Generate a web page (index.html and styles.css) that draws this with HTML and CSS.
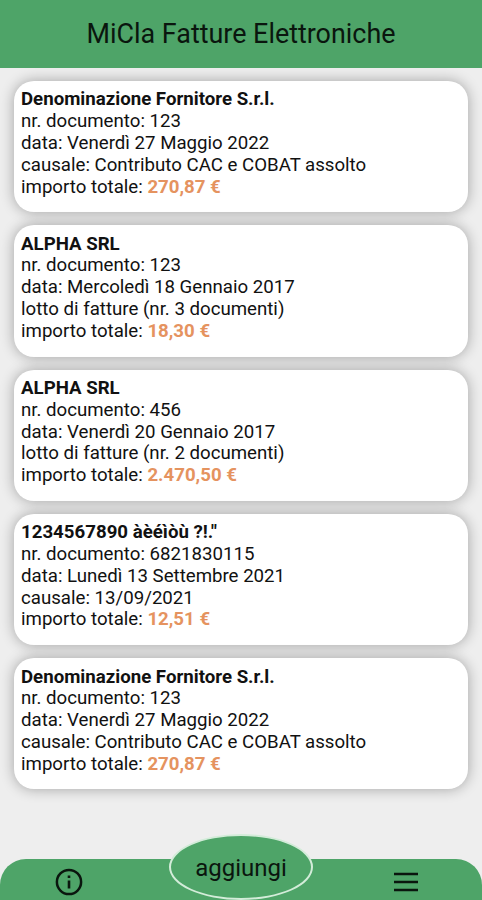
FILE: index.html
```html
<!DOCTYPE html>
<html lang="it">
<head>
    <meta charset="UTF-8">
    <meta name="viewport" content="width=device-width, initial-scale=1.0">
    <title>MiCla Fatture Elettroniche</title>
    <link rel="stylesheet" href="styles.css">
</head>
<body>
    <header class="header">
        <h1>MiCla Fatture Elettroniche</h1>
    </header>

    <main class="invoices">
        <div class="card">
            <h2>Denominazione Fornitore S.r.l.</h2>
            <p>nr. documento: 123</p>
            <p>data: Venerdì 27 Maggio 2022</p>
            <p>causale: Contributo CAC e COBAT assolto</p>
            <p>importo totale: <strong>270,87 €</strong></p>
        </div>
        <div class="card">
            <h2>ALPHA SRL</h2>
            <p>nr. documento: 123</p>
            <p>data: Mercoledì 18 Gennaio 2017</p>
            <p>lotto di fatture (nr. 3 documenti)</p>
            <p>importo totale: <strong>18,30 €</strong></p>
        </div>
        <div class="card">
            <h2>ALPHA SRL</h2>
            <p>nr. documento: 456</p>
            <p>data: Venerdì 20 Gennaio 2017</p>
            <p>lotto di fatture (nr. 2 documenti)</p>
            <p>importo totale: <strong>2.470,50 €</strong></p>
        </div>
        <div class="card">
            <h2>1234567890 àèéìòù ?!."</h2>
            <p>nr. documento: 6821830115</p>
            <p>data: Lunedì 13 Settembre 2021</p>
            <p>causale: 13/09/2021</p>
            <p>importo totale: <strong>12,51 €</strong></p>
        </div>
        <div class="card">
            <h2>Denominazione Fornitore S.r.l.</h2>
            <p>nr. documento: 123</p>
            <p>data: Venerdì 27 Maggio 2022</p>
            <p>causale: Contributo CAC e COBAT assolto</p>
            <p>importo totale: <strong>270,87 €</strong></p>
        </div>
    </main>

    <nav class="bottom-bar">
        <button class="icon-button" aria-label="Informazioni">
            <svg class="info-icon" viewBox="0 0 28 28">
                <circle cx="14" cy="14" r="12.1" fill="none" stroke="#0a160e" stroke-width="2.5"/>
                <path d="M12.7 7.4h2.6v2.6h-2.6zM12.7 12.4h2.6v8h-2.6z" fill="#0a160e"/>
            </svg>
        </button>
        <button class="icon-button" aria-label="Menu">
            <svg class="menu-icon" viewBox="0 0 26 20">
                <path d="M1 2h24M1 10h24M1 18h24" stroke="#0a160e" stroke-width="2.7"/>
            </svg>
        </button>
        <button class="add-button">aggiungi</button>
    </nav>
</body>
</html>
```

FILE: styles.css
```css
* {
    box-sizing: border-box;
}

html, body {
    margin: 0;
    padding: 0;
    height: 100%;
}

body {
    display: flex;
    flex-direction: column;
    overflow: hidden;
    background-color: #eeeeee;
    font-family: Roboto, sans-serif;
    color: #111;
}

.header {
    flex: none;
    height: 68px;
    display: flex;
    align-items: center;
    justify-content: center;
    background-color: #4ea468;
}

.header h1 {
    margin: 0;
    font-size: 26.9px;
    font-weight: 400;
    color: #0a160e;
}

/* Invoice list */
.invoices {
    flex: 1;
    min-height: 0;
    display: flex;
    flex-direction: column;
    gap: 13px;
    padding: 13px 14px 0;
    overflow: hidden;
}

.card {
    flex: none;
    height: 131.3px;
    padding: 8.4px 7px 0;
    border-radius: 20px;
    background-color: #fff;
    box-shadow: 0 0 14px rgba(0, 0, 0, 0.32);
}

.card h2,
.card p {
    margin: 0;
    font-size: 18.67px;
    font-weight: 400;
    line-height: 21.8px;
    white-space: nowrap;
}

.card h2 {
    font-weight: 700;
}

.card strong {
    color: #e5935f;
}

/* Bottom bar */
.bottom-bar {
    position: relative;
    flex: none;
    height: 41px;
    display: flex;
    align-items: flex-start;
    justify-content: space-between;
    padding: 9px 63px 0 55px;
    border-radius: 26px 26px 0 0;
    background-color: #4ea468;
}

.icon-button {
    padding: 0;
    border: none;
    background: none;
}

.icon-button svg {
    display: block;
}

.info-icon {
    width: 28px;
    height: 28px;
}

.menu-icon {
    width: 26px;
    height: 20px;
    margin-top: 4px;
}

.add-button {
    position: absolute;
    left: 50%;
    bottom: 0;
    width: 144px;
    height: 66px;
    padding: 1px 0 0;
    transform: translateX(-50%);
    border: 2px solid #d3ecd9;
    border-radius: 50%;
    background-color: #4ea468;
    font-family: inherit;
    font-size: 24px;
    color: #0a160e;
}
```
